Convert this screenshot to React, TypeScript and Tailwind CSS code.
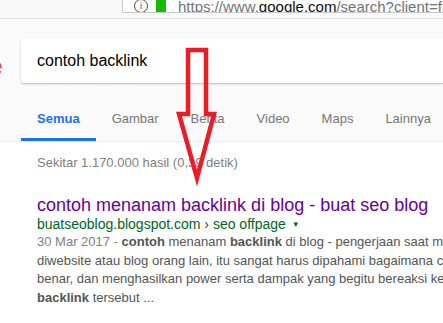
import React from 'react';

const TABS = ['Semua', 'Gambar', 'Berita', 'Video', 'Maps', 'Lainnya'];

// red annotation arrow drawn over the page
const Arrow: React.FC = () => (
  <svg className="absolute left-0 top-0 pointer-events-none" width={443} height={323}>
    <polygon
      points="188,50 206,50 206,114 214,114 197,178 179,114 188,114"
      fill="none"
      stroke="#ed1c24"
      strokeWidth={4.5}
      strokeLinejoin="miter"
    />
  </svg>
);

const App: React.FC = () => {
  return (
    <div className="relative w-[443px] h-[323px] overflow-hidden bg-white font-['Liberation_Sans',Arial,sans-serif]">

      {/* Browser toolbar strip */}
      <div className="h-[19px] bg-[#f9f9fa] border-b border-[#e1e1e2] relative">
        <div className="absolute left-[122px] top-0 right-0 h-[13px] bg-white border-l border-b border-[#c8c8ca] rounded-bl-[2px] flex items-end overflow-hidden">
          <div className="flex items-center gap-[8px] pl-[11px] -mb-[4px] h-[20px]">
            <span className="w-[14px] h-[14px] rounded-full border-[1.5px] border-[#4a4a4f] flex items-center justify-center text-[9px] text-[#4a4a4f] leading-none">i</span>
            <span className="w-[10px] h-[16px] bg-[#12bc00]" />
            <span className="ml-[4px] text-[15px] text-[#737373] whitespace-nowrap leading-none">
              https://www.<span className="text-[#0c0c0d]">google.com</span>/search?client=firefox
            </span>
          </div>
        </div>
      </div>

      {/* Google header */}
      <div className="bg-[#fafafa] relative">
        <div className="absolute left-[-12px] top-[34px] text-[#ea4335] text-[26px] font-bold leading-none">e</div>
        <div className="pt-[20px] pl-[21px]">
          <div className="h-[44px] bg-white rounded-l-[2px] shadow-[0_1px_2px_rgba(0,0,0,0.25)] flex items-center pl-[16px]">
            <span className="text-[16px] text-black">contoh backlink</span>
          </div>
        </div>

        {/* Tabs */}
        <div className="pl-[21px] flex border-b border-[#ebebeb] h-[59px] items-end">
          {TABS.map((t, i) => (
            <div
              key={t}
              className={`px-[16px] h-[30px] flex items-start text-[13px] leading-[15px] ${
                i === 0
                  ? 'text-[#1a73e8] font-bold border-b-[3px] border-[#1a73e8]'
                  : 'text-[#777777]'
              }`}
            >
              {t}
            </div>
          ))}
        </div>
      </div>

      {/* Results */}
      <div className="pl-[37px] pt-[13px]">
        <div className="text-[13px] text-[#808080] leading-[16px]">Sekitar 1.170.000 hasil (0,39 detik)</div>

        <div className="mt-[23px]">
          <div className="text-[18px] text-[#660099] leading-[22px] whitespace-nowrap">
            contoh menanam backlink di blog - buat seo blog
          </div>
          <div className="text-[14px] text-[#006621] leading-[17px] whitespace-nowrap flex items-center">
            buatseoblog.blogspot.com › seo offpage
            <span className="ml-[6px] text-[8px] text-[#006621]">▼</span>
          </div>
          <div className="text-[13px] text-[#545454] leading-[18.5px] whitespace-nowrap">
            <div><span className="text-[#808080]">30 Mar 2017 - </span><b>contoh</b> menanam <b>backlink</b> di blog - pengerjaan saat membuat</div>
            <div>diwebsite atau blog orang lain, itu sangat harus dipahami bagaimana cara</div>
            <div>benar, dan menghasilkan power serta dampak yang begitu bereaksi kepada</div>
            <div><b>backlink</b> tersebut ...</div>
          </div>
        </div>
      </div>

      <Arrow />
    </div>
  );
};

export default App;
